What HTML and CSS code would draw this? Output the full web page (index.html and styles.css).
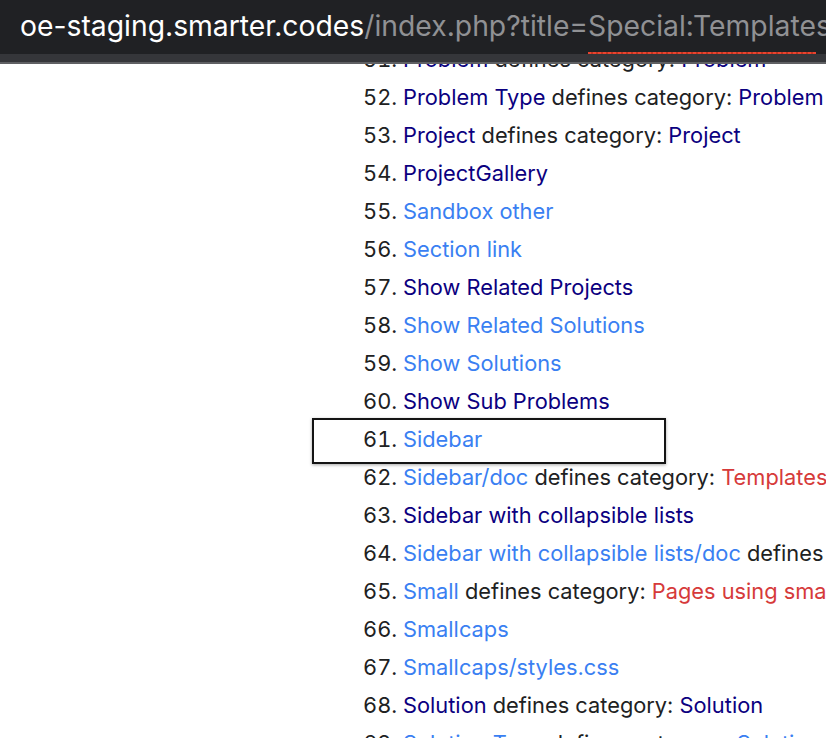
FILE: index.html
```html
<!DOCTYPE html>
<html lang="en">
<head>
<meta charset="utf-8">
<title>Templates</title>
<link rel="stylesheet" href="styles.css">
</head>
<body>
<header class="urlbar">
  <div class="url-row">
    <span class="url"><span class="host">oe-staging.smarter.codes</span><span class="path">/index.php?title=Special:Templates&amp;limit=500</span></span>
    <span class="squiggle"></span>
  </div>
  <div class="url-band"></div>
</header>
<main class="page">
  <ol class="tpl-list" start="51">
    <li><a class="nv">Problem</a> defines category: <a class="nv">Problem</a></li>
    <li><a class="nv">Problem Type</a> defines category: <a class="nv">Problem</a></li>
    <li><a class="nv">Project</a> defines category: <a class="nv">Project</a></li>
    <li><a class="nv">ProjectGallery</a></li>
    <li><a class="bl">Sandbox other</a></li>
    <li><a class="bl">Section link</a></li>
    <li><a class="nv">Show Related Projects</a></li>
    <li><a class="bl">Show Related Solutions</a></li>
    <li><a class="bl">Show Solutions</a></li>
    <li><a class="nv">Show Sub Problems</a></li>
    <li class="boxed"><a class="bl">Sidebar</a></li>
    <li><a class="bl">Sidebar/doc</a> defines category: <a class="rd">Templates with documentation</a></li>
    <li><a class="nv">Sidebar with collapsible lists</a></li>
    <li><a class="bl">Sidebar with collapsible lists/doc</a> defines category: <a class="rd">Templates</a></li>
    <li><a class="bl">Small</a> defines category: <a class="rd">Pages using small with an empty input parameter</a></li>
    <li><a class="bl">Smallcaps</a></li>
    <li><a class="bl">Smallcaps/styles.css</a></li>
    <li><a class="nv">Solution</a> defines category: <a class="nv">Solution</a></li>
    <li><a class="bl">Solution Type</a> defines category: <a class="bl">Solution Type</a></li>
  </ol>
</main>
</body>
</html>
```

FILE: styles.css
```css
html, body {
  margin: 0;
  padding: 0;
  background: #ffffff;
  overflow: hidden;
}

body {
  width: 826px;
  height: 738px;
  font-family: "Inter", "Noto Sans", "Liberation Sans", sans-serif;
}

.urlbar {
  position: fixed;
  top: 0;
  left: 0;
  right: 0;
  z-index: 10;
}

.url-row {
  position: relative;
  height: 54px;
  background: #202124;
  display: flex;
  align-items: center;
  padding-left: 20px;
  overflow: hidden;
  white-space: nowrap;
}

.url {
  font-size: 28.3px;
  line-height: 1;
  margin-top: -1px;
}

.host {
  color: #ffffff;
}

.path {
  color: #909194;
}

.squiggle {
  position: absolute;
  left: 588px;
  width: 228px;
  bottom: 0;
  height: 2px;
  background: repeating-linear-gradient(90deg, #e8432f 0 3px, #c2341f 3px 5px);
}

.url-band {
  height: 8px;
  background: #35363a;
  border-bottom: 2px solid #5f6063;
}

.page {
  padding-top: 40px;
}

.tpl-list {
  margin: 0;
  padding: 0 0 0 403px;
  font-size: 21.8px;
  line-height: 38px;
  color: #202122;
  white-space: nowrap;
}

.tpl-list li {
  height: 38px;
}

.tpl-list a {
  text-decoration: none;
  cursor: pointer;
}

.nv { color: #0b0080; }
.bl { color: #3a7ff2; }
.rd { color: #d63a3a; }

.boxed {
  position: relative;
}

.boxed::before {
  content: "";
  position: absolute;
  left: -91px;
  top: -2px;
  width: 350px;
  height: 42px;
  border: 2px solid #141414;
  box-shadow: 0 1px 3px rgba(0, 0, 0, 0.35);
  pointer-events: none;
}
```
